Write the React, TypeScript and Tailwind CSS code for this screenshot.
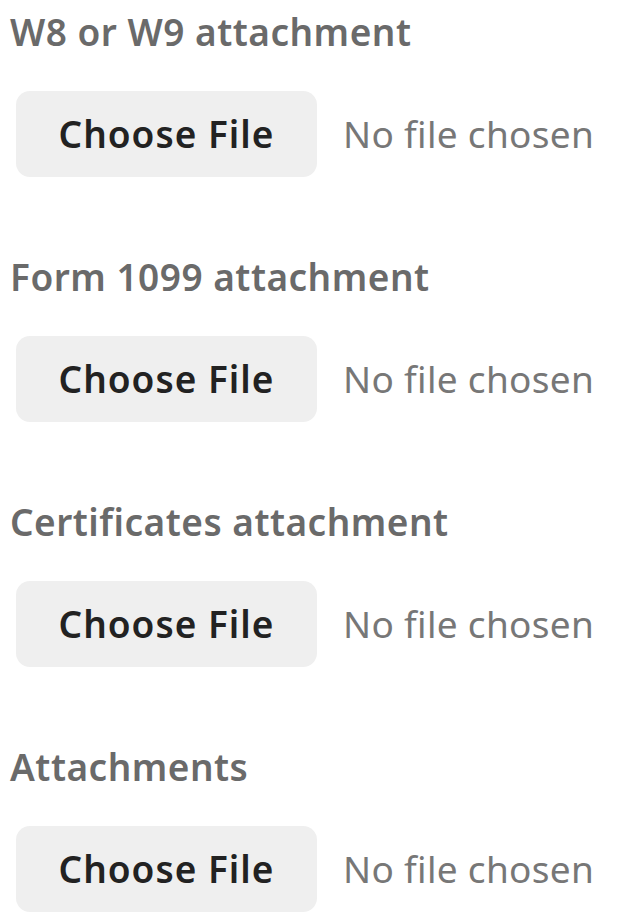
import React from "react";

const items = ["W8 or W9 attachment", "Form 1099 attachment", "Certificates attachment", "Attachments"];

export default function App() {
  return (
    <div className="w-[620px] h-[921px] bg-white overflow-hidden" style={{ fontFamily: '"Noto Sans", sans-serif' }}>
      <div className="flex flex-col gap-[78px] pt-[10px]">
        {items.map((t) => (
          <div key={t} className="flex flex-col">
            <div className="pl-[10px] text-[37px] leading-[44px] tracking-[0.5px] font-semibold text-[#6a6a6a]">{t}</div>
            <div className="mt-[37px] flex items-center pl-[16px]">
              <div className="w-[301px] h-[86px] rounded-[14px] bg-[#efefef] flex items-center justify-center text-[37px] tracking-[1px] font-semibold text-[#222]">
                Choose File
              </div>
              <div className="ml-[26px] text-[37px] tracking-[0.3px] text-[#777]">No file chosen</div>
            </div>
          </div>
        ))}
      </div>
    </div>
  );
}
